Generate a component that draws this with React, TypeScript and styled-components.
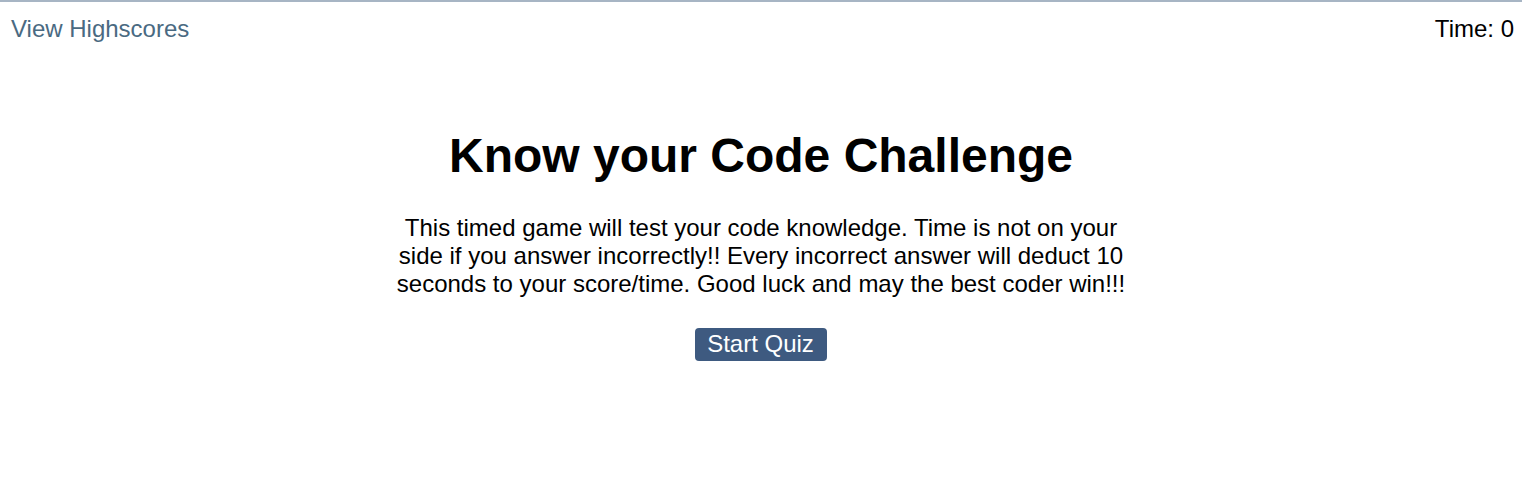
import React, { useState } from "react";
import styled, { createGlobalStyle } from "styled-components";

const GlobalStyle = createGlobalStyle`
  body {
    margin: 0;
    font-family: "Liberation Sans", Arial, sans-serif;
    background: #ffffff;
    color: #000000;
  }
`;

const Page = styled.div`
  border-top: 2px solid #a7b5c4;
  min-height: 497px;
`;

const TopBar = styled.header`
  display: flex;
  justify-content: space-between;
  align-items: center;
  padding: 13px 8px 0 11px;
  font-size: 24px;
`;

const HighscoreLink = styled.a`
  color: #4a6a82;
  text-decoration: none;
  cursor: pointer;
`;

const Timer = styled.div`
  color: #000000;
`;

const Main = styled.main`
  display: flex;
  flex-direction: column;
  align-items: center;
  text-align: center;
  padding-top: 85px;
`;

const Title = styled.h1`
  font-size: 48px;
  font-weight: bold;
  margin: 0 0 31px;
`;

const Intro = styled.p`
  font-size: 24px;
  max-width: 740px;
  margin: 0 0 30px;
`;

const StartButton = styled.button`
  font-family: inherit;
  font-size: 24px;
  color: #ffffff;
  background: #3e5a80;
  border: none;
  border-radius: 4px;
  padding: 2px 13px 3px 12px;
  cursor: pointer;
`;

const App: React.FC = () => {
  const [time] = useState<number>(0);

  return (
    <>
      <GlobalStyle />
      <Page>
        <TopBar>
          <HighscoreLink>View Highscores</HighscoreLink>
          <Timer>Time: {time}</Timer>
        </TopBar>
        <Main>
          <Title>Know your Code Challenge</Title>
          <Intro>
            This timed game will test your code knowledge. Time is not on your
            side if you answer incorrectly!! Every incorrect answer will deduct
            10 seconds to your score/time. Good luck and may the best coder
            win!!!
          </Intro>
          <StartButton>Start Quiz</StartButton>
        </Main>
      </Page>
    </>
  );
};

export default App;
